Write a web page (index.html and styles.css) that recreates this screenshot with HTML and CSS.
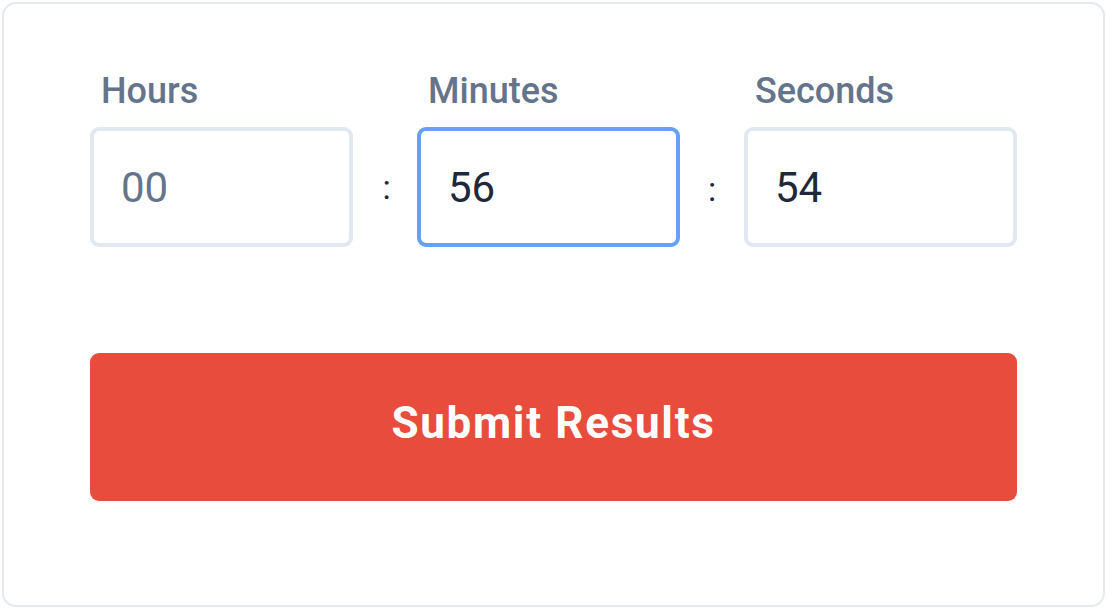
FILE: index.html
```html
<!DOCTYPE html>
<html lang="en">
<head>
    <meta charset="UTF-8">
    <meta name="viewport" content="width=device-width, initial-scale=1.0">
    <title>Time Entry</title>
    <link rel="stylesheet" href="styles.css">
</head>
<body>
    <form class="card" id="timeForm">
        <div class="time-row">
            <div class="field field-hours">
                <label for="hours">Hours</label>
                <input type="text" id="hours" name="hours" placeholder="00">
            </div>
            <span class="sep">:</span>
            <div class="field field-minutes">
                <label for="minutes">Minutes</label>
                <input type="text" id="minutes" name="minutes" value="56" class="active">
            </div>
            <span class="sep sep-low">:</span>
            <div class="field field-seconds">
                <label for="seconds">Seconds</label>
                <input type="text" id="seconds" name="seconds" value="54">
            </div>
        </div>

        <button type="submit" class="submit">Submit Results</button>
    </form>
</body>
</html>
```

FILE: styles.css
```css
body {
    font-family: Roboto, "Noto Sans", sans-serif;
    margin: 0;
    padding: 2px 3px 3px 2px;
    background-color: #fff;
}
.card {
    box-sizing: border-box;
    height: 605px;
    padding: 66px 86px 0 86px;
    border: 2px solid #e5e9f0;
    border-radius: 14px;
    background-color: #fff;
}
.time-row {
    display: flex;
    align-items: flex-end;
}
.field {
    display: flex;
    flex-direction: column;
}
.field-hours,
.field-minutes {
    width: 263px;
}
.field-seconds {
    flex: 1;
}
label {
    padding-left: 11px;
    margin-bottom: 15px;
    font-size: 36px;
    font-weight: 500;
    line-height: 42px;
    color: #64748b;
}
input {
    box-sizing: border-box;
    width: 100%;
    height: 120px;
    padding: 0 0 0 27px;
    border: 4px solid #e2e8f0;
    border-radius: 9px;
    outline: none;
    font-family: Roboto, sans-serif;
    font-size: 42px;
    color: #1e293b;
}
input::placeholder {
    color: #64748b;
}
input.active {
    border-color: #66a1f8;
}
.sep {
    width: 64px;
    height: 120px;
    display: flex;
    align-items: center;
    justify-content: center;
    padding-left: 3px;
    box-sizing: border-box;
    font-size: 34px;
    color: #1e293b;
}
.sep-low {
    padding-left: 0;
    padding-top: 4px;
}
.submit {
    display: block;
    width: 100%;
    height: 148px;
    margin-top: 106px;
    padding: 0 0 8px 0;
    border: none;
    border-radius: 9px;
    background-color: #e74c3c;
    color: #fff;
    font-family: Roboto, sans-serif;
    font-size: 44px;
    font-weight: 700;
    letter-spacing: 1.7px;
    cursor: pointer;
}
```
